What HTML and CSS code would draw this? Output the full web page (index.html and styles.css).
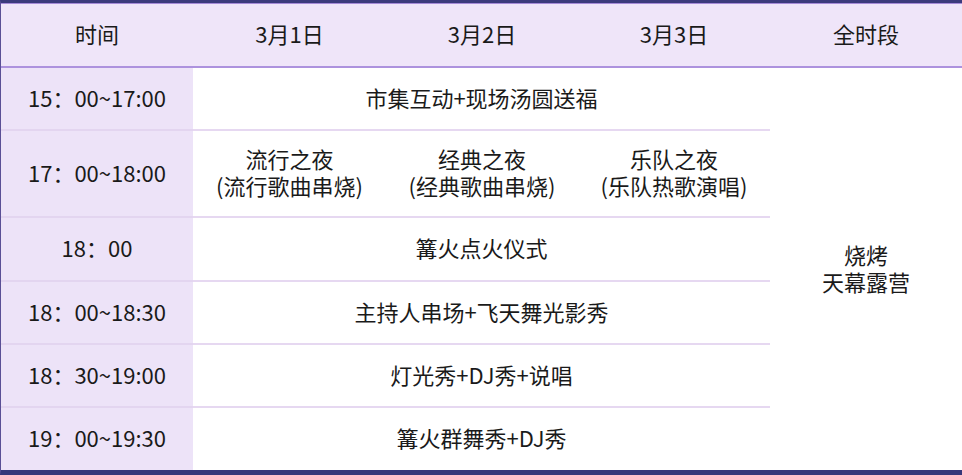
FILE: index.html
```html
<!DOCTYPE html>
<html lang="zh-CN">
<head>
<meta charset="utf-8">
<link rel="stylesheet" href="styles.css">
</head>
<body>
<div class="frame">
  <div class="grid">
    <div class="cell head">时间</div>
    <div class="cell head">3月1日</div>
    <div class="cell head">3月2日</div>
    <div class="cell head">3月3日</div>
    <div class="cell head">全时段</div>

    <div class="cell time r1">15：00~17:00</div>
    <div class="cell span r1">市集互动+现场汤圆送福</div>
    <div class="cell all">烧烤<br>天幕露营</div>

    <div class="cell time r2">17：00~18:00</div>
    <div class="cell day r2">流行之夜<br>(流行歌曲串烧)</div>
    <div class="cell day r2">经典之夜<br>(经典歌曲串烧)</div>
    <div class="cell day r2">乐队之夜<br>(乐队热歌演唱)</div>

    <div class="cell time r3">18：00</div>
    <div class="cell span r3">篝火点火仪式</div>

    <div class="cell time r4">18：00~18:30</div>
    <div class="cell span r4">主持人串场+飞天舞光影秀</div>

    <div class="cell time r5">18：30~19:00</div>
    <div class="cell span r5">灯光秀+DJ秀+说唱</div>

    <div class="cell time r6 last">19：00~19:30</div>
    <div class="cell span r6 last">篝火群舞秀+DJ秀</div>
  </div>
</div>
</body>
</html>
```
FILE: styles.css
```css
html, body {
  margin: 0;
  padding: 0;
  background: #ffffff;
}
.frame {
  width: 962px;
  height: 475px;
  box-sizing: border-box;
  border-top: 3px solid #3b3a7c;
  border-bottom: 5px solid #36367a;
  border-left: 1px solid #5a4f96;
  background: #fdfdff;
  font-family: "Noto Sans CJK SC", "Noto Sans", sans-serif;
  font-size: 22px;
  color: #1a1a1a;
}
.grid {
  display: grid;
  grid-template-columns: 192px 193px 192px 192px 192px;
  grid-template-rows: 64px 63px 87px 64px 63px 63px 62px;
  border-top: 1px solid #a58ad8;
  border-bottom: 1px solid #cdb6ea;
  box-sizing: border-box;
  height: 467px;
}
.cell {
  display: flex;
  align-items: center;
  justify-content: center;
  text-align: center;
  box-sizing: border-box;
  line-height: 27px;
  padding-bottom: 3px;
}
.head {
  background: #efe5f9;
  border-bottom: 2px solid #ad92de;
}
.time {
  background: #ede3f8;
  grid-column: 1;
  border-bottom: 2px solid #e3d5f0;
}
.span {
  grid-column: 2 / 5;
  border-bottom: 2px solid #e6d8f1;
  background: #ffffff;
}
.day {
  border-bottom: 2px solid #e6d8f1;
  background: #ffffff;
}
.all {
  grid-column: 5;
  grid-row: 2 / 8;
  background: #ffffff;
}
.r1 { grid-row: 2; }
.r2 { grid-row: 3; }
.r3 { grid-row: 4; }
.r4 { grid-row: 5; }
.r5 { grid-row: 6; }
.r6 { grid-row: 7; }
.last { border-bottom: none; }
```
